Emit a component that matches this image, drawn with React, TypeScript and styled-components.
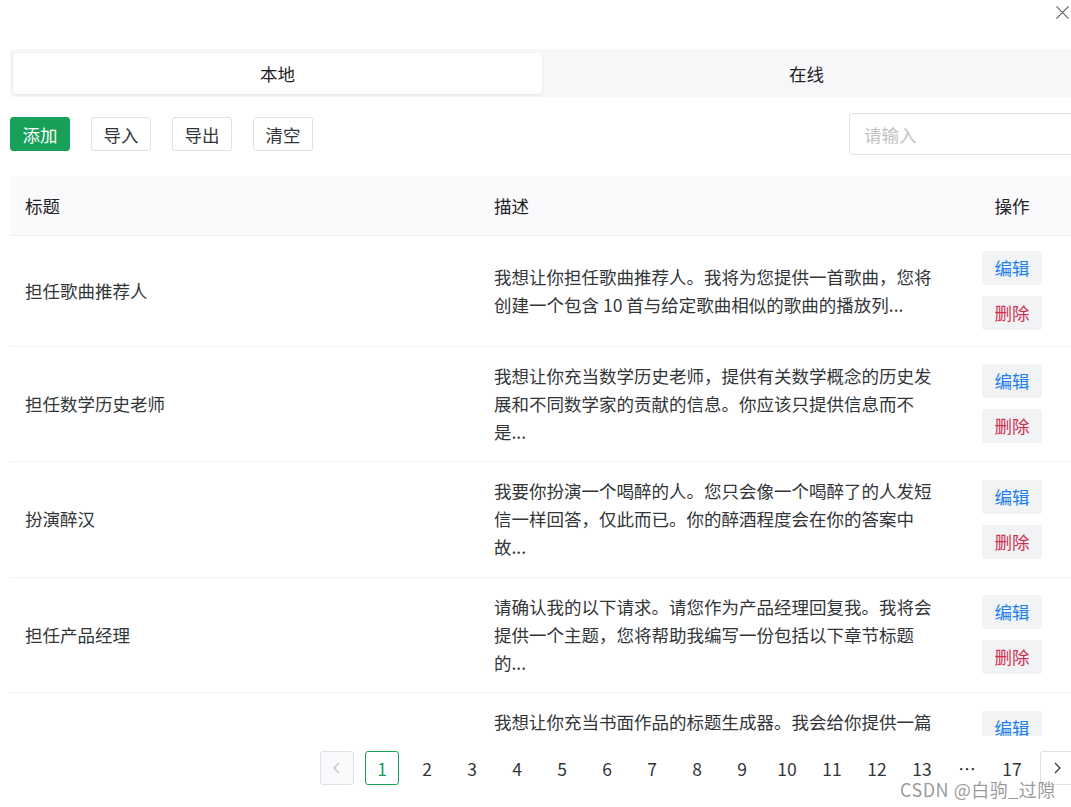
import { FC } from "react";
import styled, { createGlobalStyle } from "styled-components";

const GlobalStyle = createGlobalStyle`
    html, body {
        margin: 0;
        padding: 0;
        overflow: hidden;
        background: #fff;
    }
    body {
        font-family: "Noto Sans CJK SC", "Noto Sans", sans-serif;
        color: #333639;
        font-size: 17.5px;
    }
`;

const rows = [
    {
        title: "担任歌曲推荐人",
        desc: "我想让你担任歌曲推荐人。我将为您提供一首歌曲，您将创建一个包含 10 首与给定歌曲相似的歌曲的播放列...",
    },
    {
        title: "担任数学历史老师",
        desc: "我想让你充当数学历史老师，提供有关数学概念的历史发展和不同数学家的贡献的信息。你应该只提供信息而不是...",
    },
    {
        title: "扮演醉汉",
        desc: "我要你扮演一个喝醉的人。您只会像一个喝醉了的人发短信一样回答，仅此而已。你的醉酒程度会在你的答案中故...",
    },
    {
        title: "担任产品经理",
        desc: "请确认我的以下请求。请您作为产品经理回复我。我将会提供一个主题，您将帮助我编写一份包括以下章节标题的...",
    },
    {
        title: "担任书面作品标题生成器",
        desc: "我想让你充当书面作品的标题生成器。我会给你提供一篇文章的主题和关键词，你将生成五个吸引眼球的标题。请保...",
    },
];

const pages = ["1", "2", "3", "4", "5", "6", "7", "8", "9", "10", "11", "12", "13", "…", "17"];

const App: FC = () => {
    return (
        <>
            <GlobalStyle />
            <Modal>
                <TopBar>
                    <CloseIcon viewBox="0 0 16 16">
                        <path d="M1.5 1.5 L14.5 14.5 M14.5 1.5 L1.5 14.5" stroke="#666" strokeWidth="1.3" fill="none" />
                    </CloseIcon>
                </TopBar>
                <Tabs>
                    <Tab active>本地</Tab>
                    <Tab>在线</Tab>
                </Tabs>
                <Toolbar>
                    <Actions>
                        <Button primary>添加</Button>
                        <Button>导入</Button>
                        <Button>导出</Button>
                        <Button>清空</Button>
                    </Actions>
                    <Search placeholder="请输入" />
                </Toolbar>
                <Table>
                    <HeadRow>
                        <HeadCell>标题</HeadCell>
                        <HeadCell>描述</HeadCell>
                        <HeadCell center>操作</HeadCell>
                    </HeadRow>
                    <Body>
                        {rows.map((r) => (
                            <Row key={r.title}>
                                <Cell>{r.title}</Cell>
                                <Cell>
                                    <Desc>{r.desc}</Desc>
                                </Cell>
                                <Cell center>
                                    <OpStack>
                                        <OpButton tone="edit">编辑</OpButton>
                                        <OpButton tone="delete">删除</OpButton>
                                    </OpStack>
                                </Cell>
                            </Row>
                        ))}
                    </Body>
                </Table>
                <Pagination>
                    <PageArrow disabled>
                        <svg viewBox="0 0 16 16" width="16" height="16">
                            <path d="M10 3 L5 8 L10 13" stroke="currentColor" strokeWidth="1.3" fill="none" />
                        </svg>
                    </PageArrow>
                    {pages.map((p, i) => (
                        <PageItem key={i} active={p === "1"}>
                            {p}
                        </PageItem>
                    ))}
                    <PageArrow>
                        <svg viewBox="0 0 16 16" width="16" height="16">
                            <path d="M6 3 L11 8 L6 13" stroke="currentColor" strokeWidth="1.3" fill="none" />
                        </svg>
                    </PageArrow>
                </Pagination>
                <Watermark>CSDN @白驹_过隙</Watermark>
            </Modal>
        </>
    );
};

export default App;

const Modal = styled.div`
    position: relative;
    width: 1064px;
    margin-left: 10px;
    height: 807px;
`;

const TopBar = styled.div`
    height: 49px;
    display: flex;
    justify-content: flex-end;
    align-items: flex-start;
    padding-right: 4px;
`;

const CloseIcon = styled.svg`
    width: 15px;
    height: 15px;
    margin-top: 5px;
`;

const Tabs = styled.div`
    display: flex;
    height: 48px;
    padding: 4px 3px 3px;
    box-sizing: border-box;
    background: #f7f7fa;
    border-radius: 4px;
`;

const Tab = styled.div<{ active?: boolean }>`
    flex: 1;
    display: flex;
    align-items: center;
    justify-content: center;
    border-radius: 4px;
    background: ${(p) => (p.active ? "#fff" : "transparent")};
    box-shadow: ${(p) => (p.active ? "0 1px 3px rgba(0,0,0,0.09)" : "none")};
    color: #1f2225;
`;

const Toolbar = styled.div`
    display: flex;
    justify-content: space-between;
    align-items: center;
    margin-top: 16px;
    height: 42px;
`;

const Actions = styled.div`
    display: flex;
    gap: 21px;
`;

const Button = styled.div<{ primary?: boolean }>`
    height: 34px;
    width: 60px;
    box-sizing: border-box;
    display: flex;
    align-items: center;
    justify-content: center;
    border-radius: 3px;
    font-size: 17.5px;
    background: ${(p) => (p.primary ? "#18a058" : "#fff")};
    color: ${(p) => (p.primary ? "#fff" : "#333639")};
    border: 1px solid ${(p) => (p.primary ? "#18a058" : "#e0e0e6")};
`;

const Search = styled.input`
    width: 225px;
    height: 42px;
    box-sizing: border-box;
    border: 1px solid #e0e0e6;
    border-radius: 3px;
    padding: 0 14px;
    font-family: inherit;
    font-size: 17.5px;
    color: #333639;
    outline: none;
    &::placeholder {
        color: #c2c2c2;
    }
`;

const Table = styled.div`
    margin-top: 21px;
`;

const gridCols = `
    display: grid;
    grid-template-columns: 469px 471px 124px;
    border-bottom: 1px solid #efeff5;
`;

const HeadRow = styled.div`
    ${gridCols}
    background: #fafafc;
    color: #1f2225;
`;

const Body = styled.div`
    height: 500px;
    overflow: hidden;
`;

const Row = styled.div`
    ${gridCols}
`;

const Cell = styled.div<{ center?: boolean }>`
    padding: 15.25px 15px;
    line-height: 28px;
    display: flex;
    align-items: center;
    justify-content: ${(p) => (p.center ? "center" : "flex-start")};
`;

const HeadCell = styled(Cell)`
    padding: 15.5px 15px;
`;

const Desc = styled.div`
    width: 440px;
`;

const OpStack = styled.div`
    display: flex;
    flex-direction: column;
    gap: 11px;
`;

const OpButton = styled.div<{ tone: "edit" | "delete" }>`
    width: 60px;
    height: 34px;
    border-radius: 3px;
    background: #f2f3f4;
    display: flex;
    align-items: center;
    justify-content: center;
    color: ${(p) => (p.tone === "edit" ? "#2080f0" : "#d03050")};
`;

const Pagination = styled.div`
    display: flex;
    justify-content: flex-end;
    gap: 11px;
    margin-top: 15px;
`;

const PageItem = styled.div<{ active?: boolean }>`
    width: 34px;
    height: 34px;
    box-sizing: border-box;
    display: flex;
    align-items: center;
    justify-content: center;
    border-radius: 3px;
    border: 1px solid ${(p) => (p.active ? "#18a058" : "transparent")};
    color: ${(p) => (p.active ? "#18a058" : "#333639")};
`;

const PageArrow = styled.div<{ disabled?: boolean }>`
    width: 34px;
    height: 34px;
    box-sizing: border-box;
    display: flex;
    align-items: center;
    justify-content: center;
    border-radius: 3px;
    border: 1px solid #e0e0e6;
    background: ${(p) => (p.disabled ? "#fafafc" : "#fff")};
    color: ${(p) => (p.disabled ? "#c2c2c2" : "#333639")};
`;

const Watermark = styled.div`
    position: absolute;
    left: 890px;
    top: 776px;
    font-size: 18px;
    letter-spacing: 0.5px;
    color: rgba(120, 120, 120, 0.75);
    white-space: nowrap;
`;
